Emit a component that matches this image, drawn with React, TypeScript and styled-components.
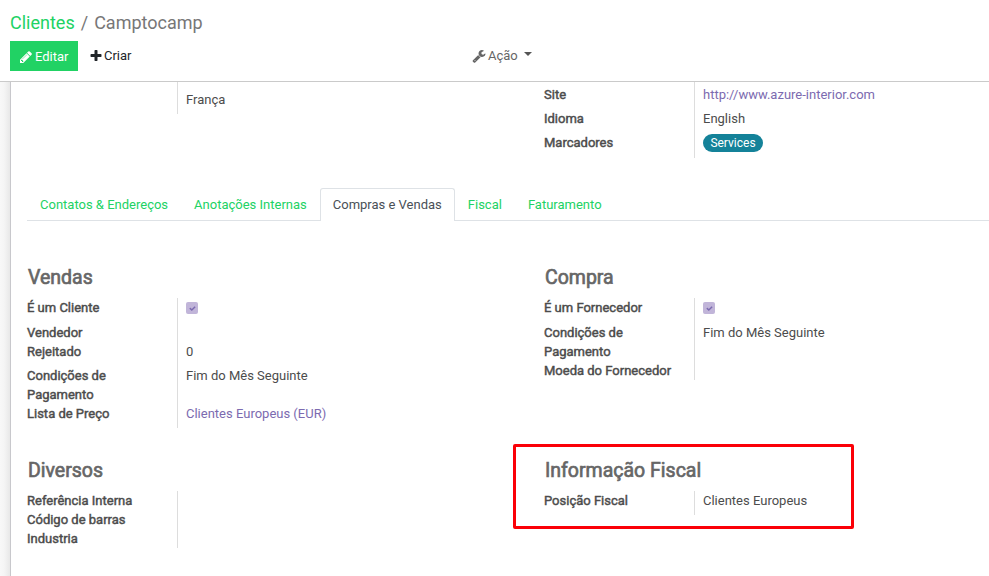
import React from 'react';
import styled, { createGlobalStyle, css } from 'styled-components';

const GlobalStyle = createGlobalStyle`
  * { box-sizing: border-box; }
  html, body { margin: 0; padding: 0; }
  body {
    background: #f8f8f8;
    color: #4c4c4c;
    font-family: Roboto, 'Liberation Sans', sans-serif;
    font-size: 13px;
    line-height: 19px;
    overflow: hidden;
  }
`;

const Page = styled.div`
  display: flex;
  flex-direction: column;
  width: 989px;
  height: 576px;
  overflow: hidden;
`;

const ControlPanel = styled.header`
  flex: none;
  height: 82px;
  padding: 9px 10px 0;
  background: #fff;
  border-bottom: 1px solid #cacaca;
`;

const Breadcrumb = styled.nav`
  display: flex;
  height: 32px;
  font-size: 18px;
  line-height: 28px;
  color: #777;
`;

const BreadcrumbLink = styled.a`
  color: #21d264;
`;

const Divider = styled.span`
  padding: 0 6px;
`;

const Toolbar = styled.div`
  display: grid;
  grid-template-columns: 462px 1fr;
`;

const ButtonGroup = styled.div`
  display: flex;
`;

const Button = styled.button<{ $primary?: boolean }>`
  display: flex;
  align-items: center;
  height: 30px;
  padding: 0;
  border: 0;
  font: inherit;
  background: none;
  color: #212529;
  ${(p) =>
    p.$primary
      ? css`
          width: 68px;
          padding: 1px 0 0 9px;
          gap: 2px;
          background: #21d264;
          color: #fff;
        `
      : css`
          padding: 0 0 1px 11px;
          gap: 1px;
        `}
`;

const ActionMenu = styled(Button)`
  padding: 0 0 1px;
  gap: 2px;
  color: #666;
`;

const Caret = styled.span`
  margin: -4px 0 0 4px;
  border: 4px solid transparent;
  border-top-color: #555;
  border-bottom: 0;
`;

const Glyph = styled.svg`
  flex: none;
  display: block;
  fill: currentColor;
`;

const Content = styled.main`
  flex: 1;
  min-height: 0;
  padding-left: 10px;
  background: linear-gradient(to right, #f8f8f8 0, #f5f5f5 4px, #e8e8e8 10px);
`;

const Sheet = styled.section`
  height: 100%;
  padding-left: 16px;
  background: #fff;
  border-left: 1px solid #c8c8cc;
`;

const Columns = styled.div<{ $height: number }>`
  display: grid;
  grid-template-columns: 517px 445px;
  align-items: start;
  height: ${(p) => p.$height}px;
`;

const Group = styled.div<{ $top?: number }>`
  padding-top: ${(p) => p.$top ?? 0}px;
`;

const GroupTitle = styled.h2`
  margin: 0;
  height: 34px;
  padding-left: 1px;
  font-size: 19.5px;
  font-weight: 400;
  line-height: 28px;
  color: #666;
  -webkit-text-stroke: 0.65px currentColor;
`;

const Row = styled.div<{ $height: number }>`
  display: grid;
  grid-template-columns: 150px 1fr;
  height: ${(p) => p.$height}px;
`;

const Label = styled.div`
  padding-right: 20px;
  white-space: pre-line;
  -webkit-text-stroke: 0.45px currentColor;
`;

const Value = styled.div<{ $link?: boolean }>`
  padding-left: 8px;
  border-left: 1px solid #ddd;
  color: ${(p) => (p.$link ? '#7c6bb0' : '#4c4c4c')};
`;

const Tag = styled.span`
  display: inline-block;
  width: 60px;
  height: 18px;
  margin-top: 1px;
  border-radius: 9px;
  background: #148299;
  color: #fff;
  font-size: 12px;
  line-height: 18px;
  text-align: center;
  vertical-align: top;
`;

const Checkbox = styled.span`
  display: flex;
  align-items: center;
  justify-content: center;
  width: 12px;
  height: 12px;
  margin-top: 4px;
  border-radius: 2px;
  background: #c1b5d9;
  color: #7c6bb0;
`;

const Tabs = styled.div`
  display: flex;
  height: 33px;
  border-bottom: 1px solid #dee2e6;
`;

const Tab = styled.div<{ $active?: boolean }>`
  height: 33px;
  padding: 6px 12px 0;
  border: 1px solid transparent;
  border-bottom: 0;
  color: #21d264;
  white-space: nowrap;
  ${(p) =>
    p.$active &&
    css`
      border-color: #dee2e6;
      border-radius: 3px 3px 0 0;
      background: #fff;
      color: #495057;
    `}
`;

const Highlight = styled.div`
  position: absolute;
  left: 513px;
  top: 444px;
  width: 341px;
  height: 85px;
  border: 3px solid #fb0007;
  border-radius: 2px;
`;

const shapes = {
  pencil:
    'M491 1536l91-91-235-235-91 91v107h128v128h107zm523-928q0-22-22-22-10 0-17 7l-542 542q-7 7-7 17 0 22 22 22 10 0 17-7l542-542q7-7 7-17zm-54-192l416 416-832 832h-416v-416zm683 96q0 53-37 90l-166 166-416-416 166-165q36-38 90-38 53 0 91 38l235 234q37 39 37 91z',
  plus:
    'M1600 736v192q0 40-28 68t-68 28h-416v416q0 40-28 68t-68 28h-192q-40 0-68-28t-28-68v-416h-416q-40 0-68-28t-28-68v-192q0-40 28-68t68-28h416v-416q0-40 28-68t68-28h192q40 0 68 28t28 68v416h416q40 0 68 28t28 68z',
  wrench:
    'M448 1472q0-26-19-45t-45-19-45 19-19 45 19 45 45 19 45-19 19-45zm644-420l-682 682q-37 37-90 37-52 0-91-37l-106-108q-38-36-38-90 0-53 38-91l681-681q39 98 114.5 173.5t173.5 114.5zm634-435q0 39-23 106-47 134-164.5 217.500t-258.500 83.500q-185 0-316.500-131.500t-131.500-316.500 131.500-316.500 316.500-131.500q58 0 121.500 16.500t107.500 46.500q16 11 16 28t-16 28l-293 169v224l193 107q5-3 79-48.500t135.500-81 70.500-35.500q15 0 23.500 10t8.500 25z',
  check:
    'M1671 566q0 40-28 68l-724 724-136 136q-28 28-68 28t-68-28l-136-136-362-362q-28-28-28-68t28-68l136-136q28-28 68-28t68 28l294 295 656-657q28-28 68-28t68 28l136 136q28 28 28 68z',
};

function Icon({ name, size = 14 }: { name: keyof typeof shapes; size?: number }) {
  return (
    <Glyph width={size} height={size} viewBox="0 0 1792 1792">
      <path d={shapes[name]} />
    </Glyph>
  );
}

type Field = { label?: string; value?: React.ReactNode; link?: boolean; height?: number };

const checked = (
  <Checkbox>
    <Icon name="check" size={7} />
  </Checkbox>
);

function Fields({ items }: { items: Field[] }) {
  return (
    <>
      {items.map((f, i) => (
        <Row key={i} $height={f.height ?? 24}>
          <Label>{f.label}</Label>
          <Value $link={f.link}>{f.value}</Value>
        </Row>
      ))}
    </>
  );
}

const sales: Field[] = [
  { label: 'É um Cliente', value: checked, height: 25 },
  { label: 'Vendedor', height: 19 },
  { label: 'Rejeitado', value: '0' },
  { label: 'Condições de\nPagamento', value: 'Fim do Mês Seguinte', height: 38 },
  { label: 'Lista de Preço', value: 'Clientes Europeus (EUR)', link: true },
];

const purchase: Field[] = [
  { label: 'É um Fornecedor', value: checked, height: 25 },
  { label: 'Condições de\nPagamento', value: 'Fim do Mês Seguinte', height: 38 },
  { label: 'Moeda do Fornecedor', height: 19 },
];

const misc: Field[] = [
  { label: 'Referência Interna', height: 19 },
  { label: 'Código de barras', height: 19 },
  { label: 'Industria', height: 19 },
];

const contact: Field[] = [
  { label: 'Site', value: 'http://www.azure-interior.com', link: true },
  { label: 'Idioma', value: 'English' },
  { label: 'Marcadores', value: <Tag>Services</Tag>, height: 25 },
];

const tabs = ['Contatos & Endereços', 'Anotações Internas', 'Compras e Vendas', 'Fiscal', 'Faturamento'];

export default function App() {
  return (
    <Page>
      <GlobalStyle />
      <ControlPanel>
        <Breadcrumb>
          <BreadcrumbLink>Clientes</BreadcrumbLink>
          <Divider>/</Divider>
          <span>Camptocamp</span>
        </Breadcrumb>
        <Toolbar>
          <ButtonGroup>
            <Button $primary>
              <Icon name="pencil" />
              Editar
            </Button>
            <Button>
              <Icon name="plus" />
              Criar
            </Button>
          </ButtonGroup>
          <ActionMenu>
            <Icon name="wrench" />
            Ação
            <Caret />
          </ActionMenu>
        </Toolbar>
      </ControlPanel>
      <Content>
        <Sheet>
          <Columns $height={106}>
            <Group>
              <Fields items={[{ height: 8 }, { value: 'França' }]} />
            </Group>
            <Group>
              <Fields items={[{ height: 3 }, ...contact]} />
            </Group>
          </Columns>
          <Tabs>
            {tabs.map((t) => (
              <Tab key={t} $active={t === 'Compras e Vendas'}>
                {t}
              </Tab>
            ))}
          </Tabs>
          <Columns $height={223}>
            <Group $top={43}>
              <GroupTitle>Vendas</GroupTitle>
              <Fields items={sales} />
            </Group>
            <Group $top={43}>
              <GroupTitle>Compra</GroupTitle>
              <Fields items={purchase} />
            </Group>
          </Columns>
          <Columns $height={120}>
            <Group $top={13}>
              <GroupTitle>Diversos</GroupTitle>
              <Fields items={misc} />
            </Group>
            <Group $top={13}>
              <GroupTitle>Informação Fiscal</GroupTitle>
              <Fields items={[{ label: 'Posição Fiscal', value: 'Clientes Europeus' }]} />
            </Group>
          </Columns>
        </Sheet>
      </Content>
      <Highlight />
    </Page>
  );
}
